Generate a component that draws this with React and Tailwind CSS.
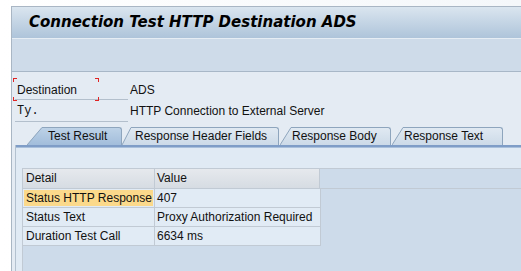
import React from "react";

const tabs = [
  { label: "Test Result", active: true, slant: 15, body: "w-[80px]", pad: "pl-[6px]", gap: "" },
  { label: "Response Header Fields", active: false, slant: 9, body: "w-[148px]", pad: "pl-[4px]", gap: "" },
  { label: "Response Body", active: false, slant: 11, body: "w-[100px]", pad: "pl-[1px]", gap: "ml-[1px]" },
  { label: "Response Text", active: false, slant: 11, body: "w-[100px]", pad: "pl-[1px]", gap: "ml-[1px]" },
];

const rows = [
  { detail: "Status HTTP Response", value: "407", hilite: true },
  { detail: "Status Text", value: "Proxy Authorization Required" },
  { detail: "Duration Test Call", value: "6634 ms" },
];

function Tab({ tab, idx }) {
  const gid = "tabgrad" + idx;
  const top = tab.active ? "#bdd2e7" : "#e0e9f2";
  const bottom = tab.active ? "#a2bddb" : "#ccdae8";
  return (
    <div className={`flex items-end h-[18px] ${tab.gap} ${tab.active ? "z-10" : ""}`}>
      <svg width={tab.slant} height="18" className="block shrink-0">
        <defs>
          <linearGradient id={gid} x1="0" y1="0" x2="0" y2="1">
            <stop offset="0" stopColor={top} />
            <stop offset="1" stopColor={bottom} />
          </linearGradient>
        </defs>
        <polygon points={`0,18 ${tab.slant},0 ${tab.slant},18`} fill={`url(#${gid})`} />
        <line x1="0" y1="18" x2={tab.slant} y2="0.5" stroke="#8ea5bd" strokeWidth="1" />
      </svg>
      <div
        className={`${tab.body} ${tab.pad} h-[18px] border-t border-r border-[#8ea5bd] rounded-tr-[3px] leading-[17px] whitespace-nowrap ${
          tab.active
            ? "bg-gradient-to-b from-[#bdd2e7] to-[#a2bddb]"
            : "bg-gradient-to-b from-[#e0e9f2] to-[#ccdae8]"
        }`}
      >
        {tab.label}
      </div>
    </div>
  );
}

export default function App() {
  return (
    <div className="w-[521px] h-[271px] overflow-hidden bg-gradient-to-r from-white to-[#f4f7fa] pt-[6px] pl-[11px] font-['Liberation_Sans',Arial,sans-serif] text-[12px] text-[#111]">
      <div className="h-full flex flex-col border-l border-t border-[#a9b6c4] bg-[#e4ebf3]">
        {/* title bar */}
        <div className="h-[31px] shrink-0 flex items-center pl-[17px] bg-gradient-to-b from-[#dae5ef] to-[#aec4da]">
          <span className="font-['DejaVu_Sans',Verdana,sans-serif] text-[15px] font-bold italic text-black">
            Connection Test HTTP Destination ADS
          </span>
        </div>
        <div className="h-px shrink-0 bg-[#e6edf4]" />
        {/* toolbar */}
        <div className="h-[33px] shrink-0 bg-[#cedbe9] border-b border-[#a8b7c7]" />

        {/* fields */}
        <div className="relative flex flex-col flex-1">
          <div className="mt-[6px] flex items-center h-[22px]">
            <div className="relative ml-[3px] w-[113px] h-[22px] border-b border-[#b3bfcc] pl-[2px] flex items-center pt-[2px]">
              Destination
              <span className="absolute left-[-2px] top-0 w-[4px] h-[4px] border-l border-t border-[#e02424]" />
              <span className="absolute left-[80px] top-0 w-[4px] h-[4px] border-r border-t border-[#e02424]" />
              <span className="absolute left-[-2px] top-[19px] w-[4px] h-[4px] border-l border-b border-[#e02424]" />
              <span className="absolute left-[80px] top-[19px] w-[4px] h-[4px] border-r border-b border-[#e02424]" />
            </div>
            <span className="ml-[2px] pt-[2px]">ADS</span>
          </div>
          <div className="flex items-center h-[22px]">
            <div className="ml-[3px] w-[113px] h-[22px] border-b border-[#b3bfcc] pl-[2px] flex items-center font-['Liberation_Mono',monospace] text-[12px]">
              Ty.
            </div>
            <span className="ml-[2px]">HTTP Connection to External Server</span>
          </div>

          {/* tab strip */}
          <div className="mt-[5px] flex items-end ml-[15px] h-[18px]">
            {tabs.map((t, i) => (
              <Tab key={t.label} tab={t} idx={i} />
            ))}
          </div>

          {/* tab panel */}
          <div className="ml-[3px] flex-1 flex flex-col border-l border-[#b3c1cf] bg-[#e0eaf4]">
            <div className="h-[2px] shrink-0 bg-[#7f9dc7]" />
            <div className="h-px shrink-0 bg-[#a9c0dc]" />
            <div className="flex-1 flex flex-col pl-[6px] pt-[20px]">
              <div className="flex-1 border-l border-t border-[#c1cad4] bg-[#cddbea]">
                <div className="flex h-[20px] border-b border-[#c1cad4]">
                  <div className="w-[132px] border-r border-[#c1cad4] pl-[3px] leading-[19px] bg-gradient-to-b from-[#e6e9ed] to-[#d6dce3]">
                    Detail
                  </div>
                  <div className="w-[165px] border-r border-[#c1cad4] pl-[2px] leading-[19px] bg-gradient-to-b from-[#e6e9ed] to-[#d6dce3]">
                    Value
                  </div>
                </div>
                <div className="w-[298px]">
                  {rows.map((r) => (
                    <div key={r.detail} className="flex h-[19px] border-b border-[#c1cad4] bg-[#e1ebf5]">
                      <div className="w-[132px] border-r border-[#c1cad4] p-px">
                        <div className={`h-full pl-[2px] leading-[17px] whitespace-nowrap ${r.hilite ? "bg-[#fbd98b]" : ""}`}>
                          {r.detail}
                        </div>
                      </div>
                      <div className="w-[166px] border-r border-[#c1cad4] pl-[2px] leading-[18px] whitespace-nowrap">
                        {r.value}
                      </div>
                    </div>
                  ))}
                </div>
              </div>
            </div>
          </div>
        </div>
      </div>
    </div>
  );
}
